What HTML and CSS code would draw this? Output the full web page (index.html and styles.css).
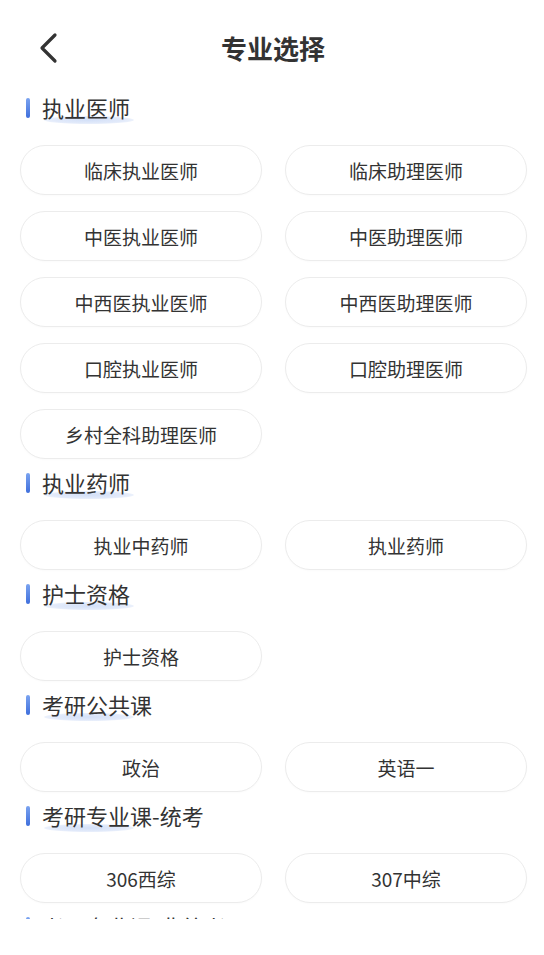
FILE: index.html
```html
<!DOCTYPE html>
<html lang="zh-CN">
<head>
<meta charset="utf-8">
<title>专业选择</title>
<link rel="stylesheet" href="styles.css">
</head>
<body>
<div class="page">
  <header class="nav">
    <div class="back">
      <svg width="22" height="32" viewBox="0 0 22 32"><polyline points="17,3 4,16 17,29" fill="none" stroke="#333" stroke-width="3.2" stroke-linecap="round" stroke-linejoin="round"/></svg>
    </div>
    <h1 class="title">专业选择</h1>
    <div></div>
  </header>
  <main class="list">
    <section class="group">
      <h2 class="head"><span class="bar"></span><span class="label">执业医师</span></h2>
      <div class="grid">
        <div class="pill">临床执业医师</div>
        <div class="pill">临床助理医师</div>
        <div class="pill">中医执业医师</div>
        <div class="pill">中医助理医师</div>
        <div class="pill">中西医执业医师</div>
        <div class="pill">中西医助理医师</div>
        <div class="pill">口腔执业医师</div>
        <div class="pill">口腔助理医师</div>
        <div class="pill">乡村全科助理医师</div>
      </div>
    </section>
    <section class="group">
      <h2 class="head"><span class="bar"></span><span class="label">执业药师</span></h2>
      <div class="grid">
        <div class="pill">执业中药师</div>
        <div class="pill">执业药师</div>
      </div>
    </section>
    <section class="group">
      <h2 class="head"><span class="bar"></span><span class="label">护士资格</span></h2>
      <div class="grid">
        <div class="pill">护士资格</div>
      </div>
    </section>
    <section class="group">
      <h2 class="head"><span class="bar"></span><span class="label">考研公共课</span></h2>
      <div class="grid">
        <div class="pill">政治</div>
        <div class="pill">英语一</div>
      </div>
    </section>
    <section class="group">
      <h2 class="head"><span class="bar"></span><span class="label">考研专业课-统考</span></h2>
      <div class="grid">
        <div class="pill">306西综</div>
        <div class="pill">307中综</div>
      </div>
    </section>
    <section class="group">
      <h2 class="head"><span class="bar"></span><span class="label">考研专业课-非统考</span></h2>
    </section>
  </main>
</div>
</body>
</html>
```
FILE: styles.css
```css
* { box-sizing: border-box; }
html, body { margin: 0; padding: 0; background: #fff; }
body {
  font-family: "Noto Sans CJK SC", "Noto Sans", sans-serif;
  color: #333;
}
.page { width: 544px; }
.nav {
  display: grid;
  grid-template-columns: 1fr auto 1fr;
  align-items: center;
  height: 84px;
  padding: 12px 36px 0 38px;
}
.back { display: flex; align-items: center; height: 32px; }
.back svg { display: block; }
.title {
  margin: 0;
  font-size: 26px;
  font-weight: 700;
  line-height: 36px;
  color: #333;
}
.list {
  height: 835px;
  overflow: hidden;
}
.head {
  margin: 8px 0 23px 0;
  height: 30px;
  display: flex;
  align-items: center;
  padding-left: 26px;
  font-size: 22px;
  font-weight: 400;
  line-height: 30px;
  color: #333;
}
.bar {
  width: 4px;
  height: 20px;
  border-radius: 2px;
  background: linear-gradient(180deg, #7aa3f0, #3f6fdc);
  margin-right: 12px;
  margin-top: 2px;
}
.label { position: relative; z-index: 0; }
.label::after {
  content: "";
  position: absolute;
  left: 2px;
  top: 24px;
  width: 90px;
  height: 8px;
  border-radius: 50%;
  background: radial-gradient(ellipse at center, #d3e0f8 0%, #e2eafa 55%, rgba(230,237,251,0) 100%);
  z-index: -1;
}
.grid {
  display: grid;
  grid-template-columns: 242px 242px;
  column-gap: 23px;
  row-gap: 16px;
  padding-left: 20px;
}
.pill {
  height: 50px;
  border: 1px solid #ececec;
  border-radius: 25px;
  background: #fff;
  display: flex;
  align-items: center;
  justify-content: center;
  font-size: 19px;
  color: #333;
  box-shadow: 0 1px 2px rgba(0,0,0,0.02);
}
```
